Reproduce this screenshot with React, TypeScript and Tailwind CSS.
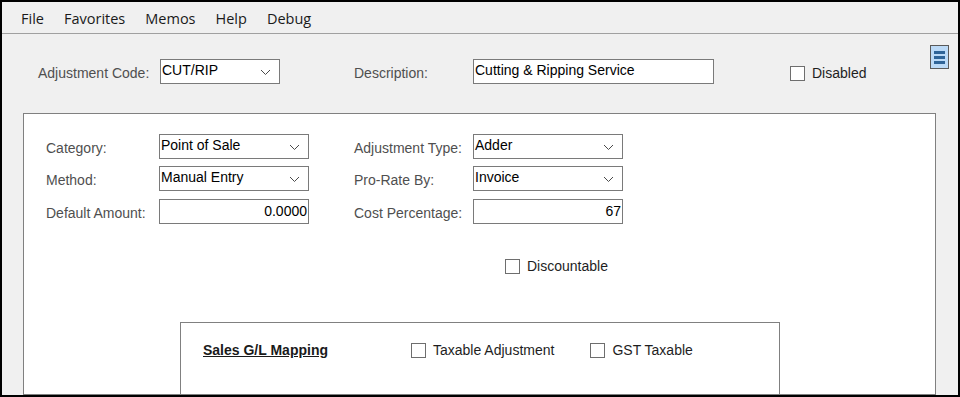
import React from 'react';

const menuItems = ['File', 'Favorites', 'Memos', 'Help', 'Debug'];

// Small chevron used inside the combo boxes
const Chevron = () => (
    <svg width="11" height="7" viewBox="0 0 11 7" className="shrink-0">
        <polyline points="1,1 5.5,5.5 10,1" fill="none" stroke="#4a4a4a" strokeWidth="1" />
    </svg>
);

const Combo = ({ value, width }: { value: string; width: string }) => (
    <div className={`${width} h-[25px] border border-[#7a7a7a] bg-white flex items-start justify-between pl-[1px] pr-[8px]`}>
        <span className="text-[14px] leading-[21px] text-black">{value}</span>
        <div className="pt-[9px]">
            <Chevron />
        </div>
    </div>
);

const NumberBox = ({ value }: { value: string }) => (
    <div className="w-[150px] h-[25px] border border-[#7a7a7a] bg-white flex items-center justify-end pr-[1px]">
        <span className="text-[14px] text-black">{value}</span>
    </div>
);

const Check = ({ label, className = '' }: { label: string; className?: string }) => (
    <div className={`flex items-center gap-[7px] ${className}`}>
        <div className="w-[15px] h-[15px] border border-[#6e6e6e] bg-white"></div>
        <span className="text-[14px] text-[#1e1e1e]">{label}</span>
    </div>
);

const Label = ({ text, width }: { text: string; width: string }) => (
    <span className={`${width} shrink-0 pt-[3px] text-[14px] text-[#4f4f4f]`}>{text}</span>
);

export default function App() {
    return (
        <div
            className="w-[960px] h-[397px] border-2 border-black bg-[#f0f0f0] overflow-hidden flex flex-col"
            style={{ fontFamily: '"Liberation Sans", Arial, sans-serif' }}
        >
            {/* Menu bar */}
            <div
                className="h-[32px] shrink-0 border-b border-[#a0a0a0] flex items-center pl-[19px] pt-[2px] gap-[20px] text-[14.5px] text-[#1a1a1a]"
                style={{ fontFamily: '"Open Sans", "Noto Sans", sans-serif' }}
            >
                {menuItems.map(item => (
                    <span key={item}>{item}</span>
                ))}
            </div>

            {/* Header row */}
            <div className="flex items-start pt-[11px] pl-[36px] pr-[9px]">
                <div className="flex items-center mt-[14px]">
                    <Label text="Adjustment Code:" width="w-[122px]" />
                    <Combo value="CUT/RIP" width="w-[120px]" />
                    <Label text="Description:" width="w-[119px] ml-[74px]" />
                    <div className="w-[241px] h-[25px] border border-[#7a7a7a] bg-white flex items-start pl-[1px]">
                        <span className="text-[14px] leading-[21px] text-black">Cutting &amp; Ripping Service</span>
                    </div>
                    <Check label="Disabled" className="ml-[76px] pt-[3px]" />
                </div>
                <div className="ml-auto w-[19px] h-[24px] border border-[#5a5a5a] bg-[#bcdaf7] flex flex-col items-center justify-center gap-[2px]">
                    <div className="w-[11px] h-[3px] bg-[#2f6498]"></div>
                    <div className="w-[11px] h-[3px] bg-[#2f6498]"></div>
                    <div className="w-[11px] h-[3px] bg-[#2f6498]"></div>
                </div>
            </div>

            {/* Main panel */}
            <div className="flex-1 ml-[21px] mr-[22px] mt-[29px] border border-[#808080] bg-white pt-[20px] pl-[22px] min-h-0">
                <div className="flex flex-col gap-[7px]">
                    <div className="flex items-center">
                        <Label text="Category:" width="w-[113px]" />
                        <Combo value="Point of Sale" width="w-[150px]" />
                        <Label text="Adjustment Type:" width="w-[119px] ml-[45px]" />
                        <Combo value="Adder" width="w-[150px]" />
                    </div>
                    <div className="flex items-center">
                        <Label text="Method:" width="w-[113px]" />
                        <Combo value="Manual Entry" width="w-[150px]" />
                        <Label text="Pro-Rate By:" width="w-[119px] ml-[45px]" />
                        <Combo value="Invoice" width="w-[150px]" />
                    </div>
                    <div className="flex items-center mt-[1px]">
                        <Label text="Default Amount:" width="w-[113px]" />
                        <NumberBox value="0.0000" />
                        <Label text="Cost Percentage:" width="w-[119px] ml-[45px]" />
                        <NumberBox value="67" />
                    </div>
                </div>

                <Check label="Discountable" className="ml-[459px] mt-[32px]" />

                {/* Sales G/L mapping sub panel */}
                <div className="ml-[134px] mt-[45px] w-[600px] h-[100px] border border-[#808080] pt-[17px] pl-[22px]">
                    <div className="flex items-center">
                        <span className="w-[208px] text-[14px] font-bold underline text-[#1a1a1a]">Sales G/L Mapping</span>
                        <Check label="Taxable Adjustment" />
                        <Check label="GST Taxable" className="ml-[36px]" />
                    </div>
                </div>
            </div>
        </div>
    );
}
